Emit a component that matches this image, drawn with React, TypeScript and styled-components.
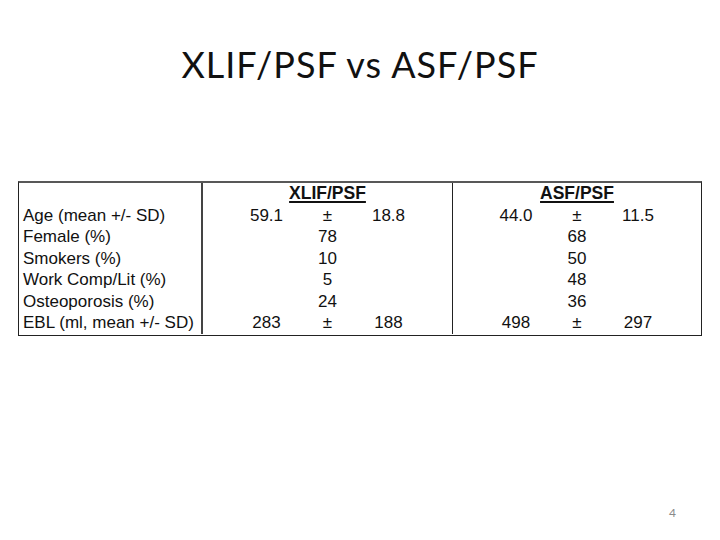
import styled, { createGlobalStyle } from "styled-components";

interface StatRow {
    label: string;
    xlif: string[];
    asf: string[];
}

const rows: StatRow[] = [
    { label: "Age (mean +/- SD)", xlif: ["59.1", "±", "18.8"], asf: ["44.0", "±", "11.5"] },
    { label: "Female (%)", xlif: ["78"], asf: ["68"] },
    { label: "Smokers (%)", xlif: ["10"], asf: ["50"] },
    { label: "Work Comp/Lit (%)", xlif: ["5"], asf: ["48"] },
    { label: "Osteoporosis (%)", xlif: ["24"], asf: ["36"] },
    { label: "EBL (ml, mean +/- SD)", xlif: ["283", "±", "188"], asf: ["498", "±", "297"] },
];

const GlobalStyle = createGlobalStyle`
    html, body {
        margin: 0;
        padding: 0;
        background: #ffffff;
    }
`;

const Slide = styled.div`
    width: 720px;
    height: 540px;
    display: flex;
    flex-direction: column;
    box-sizing: border-box;
    padding-top: 43px;
    background: #ffffff;
    overflow: hidden;
`;

const Title = styled.h1`
    margin: 0;
    font-family: Lato, "Open Sans", sans-serif;
    font-weight: 400;
    font-size: 36px;
    letter-spacing: 1px;
    line-height: 43px;
    text-align: center;
    color: #111111;
`;

const Table = styled.div`
    margin: 95px 0 0 18px;
    width: 684px;
    box-sizing: border-box;
    border-top: 2px solid #585858;
    border-left: 1px solid #222222;
    border-right: 1px solid #222222;
    border-bottom: 1px solid #222222;
    padding-bottom: 1.5px;
    font-family: "Liberation Sans", Arial, sans-serif;
    font-size: 17px;
    color: #111111;
`;

const Row = styled.div`
    display: grid;
    grid-template-columns: 184px 250px 248px;
    height: 21.5px;
    line-height: 21.5px;
`;

const LabelCell = styled.div`
    box-sizing: border-box;
    border-right: 2px solid #444444;
    padding-left: 4px;
    white-space: nowrap;
`;

const GroupCell = styled.div<{ $divider?: boolean }>`
    box-sizing: border-box;
    border-right: ${(p) => (p.$divider ? "1px solid #222222" : "none")};
    display: grid;
    grid-template-columns: repeat(3, 61px);
    justify-content: center;
    text-align: center;
`;

const GroupTitle = styled.span`
    grid-column: 1 / 4;
    font-weight: 700;
    font-size: 17.5px;
    text-decoration: underline;
    text-underline-offset: 2px;
    text-decoration-thickness: 1.5px;
`;

const Value = styled.span<{ $single?: boolean }>`
    grid-column: ${(p) => (p.$single ? "2" : "auto")};
`;

const Footer = styled.div`
    margin-top: auto;
    display: flex;
    justify-content: flex-end;
    padding: 0 44px 20px 0;
    font-family: Lato, "Open Sans", sans-serif;
    font-size: 12px;
    color: #8a8a8a;
`;

function Values({ items }: { items: string[] }) {
    if (items.length === 1) {
        return <Value $single>{items[0]}</Value>;
    }
    return (
        <>
            {items.map((v, i) => (
                <Value key={i}>{v}</Value>
            ))}
        </>
    );
}

export default function App() {
    return (
        <>
            <GlobalStyle />
            <Slide>
                <Title>XLIF/PSF vs ASF/PSF</Title>
                <Table>
                    <Row>
                        <LabelCell />
                        <GroupCell $divider>
                            <GroupTitle>XLIF/PSF</GroupTitle>
                        </GroupCell>
                        <GroupCell>
                            <GroupTitle>ASF/PSF</GroupTitle>
                        </GroupCell>
                    </Row>
                    {rows.map((r) => (
                        <Row key={r.label}>
                            <LabelCell>{r.label}</LabelCell>
                            <GroupCell $divider>
                                <Values items={r.xlif} />
                            </GroupCell>
                            <GroupCell>
                                <Values items={r.asf} />
                            </GroupCell>
                        </Row>
                    ))}
                </Table>
                <Footer>4</Footer>
            </Slide>
        </>
    );
}
